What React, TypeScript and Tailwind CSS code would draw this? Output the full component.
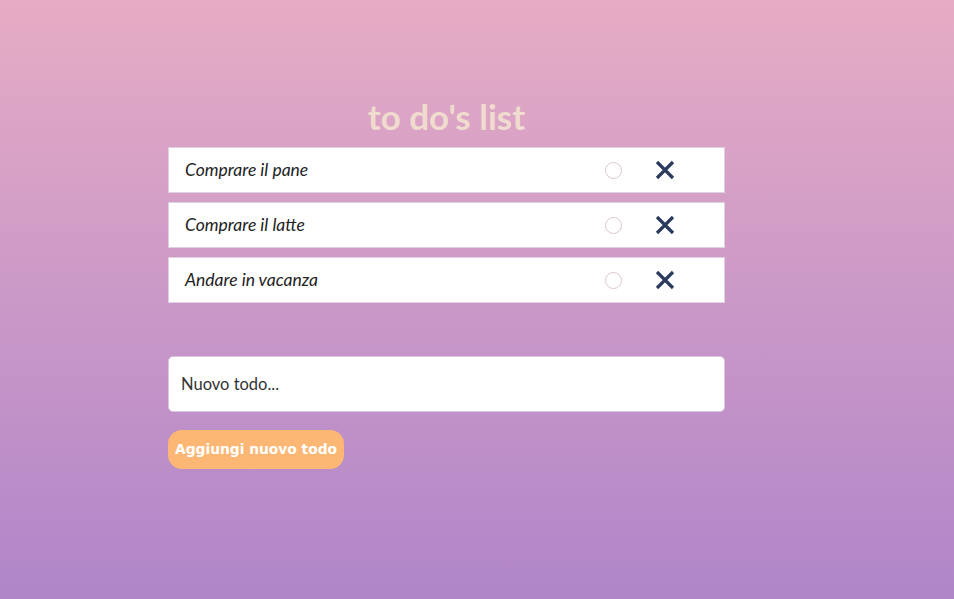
import React from "react";

const todos = ["Comprare il pane", "Comprare il latte", "Andare in vacanza"];

function XIcon() {
  return (
    <svg width="20" height="20" viewBox="0 0 20 20" fill="none">
      <path d="M2 2 L18 18 M18 2 L2 18" stroke="#2b3b5e" strokeWidth="3.2" strokeLinecap="butt" />
    </svg>
  );
}

export default function App() {
  return (
    <div
      className="w-full h-[599px] bg-gradient-to-b from-[#e7acc4] to-[#b085c9]"
      style={{ fontFamily: "Lato, 'Open Sans', sans-serif" }}
    >
      <div className="w-[557px] ml-[168px] pt-[96px]">
        <h1 className="text-center text-[35px] font-bold text-[#f0dccf] leading-[40px] h-[51px]">to do's list</h1>
        <div className="flex flex-col gap-[9px]">
          {todos.map((t) => (
            <div key={t} className="h-[46px] bg-white border border-[#ddd0e0] flex items-center">
              <span className="pl-[16px] italic text-[17.5px] text-[#222] flex-1">{t}</span>
              <span className="w-[17px] h-[17px] rounded-full border border-[#dcc6cc] mr-[33px]"></span>
              <span className="mr-[49px] flex items-center"><XIcon /></span>
            </div>
          ))}
        </div>
        <div className="mt-[53px] h-[56px] bg-white rounded-[5px] border border-[#d8c8dc] flex items-center pl-[12px] text-[16.5px] text-[#333]">
          Nuovo todo...
        </div>
        <button
          className="mt-[18px] h-[39px] w-[176px] rounded-[14px] bg-[#fdb774] text-white font-bold text-[13.8px]"
          style={{ fontFamily: "'DejaVu Sans', sans-serif" }}
        >
          Aggiungi nuovo todo
        </button>
      </div>
    </div>
  );
}
